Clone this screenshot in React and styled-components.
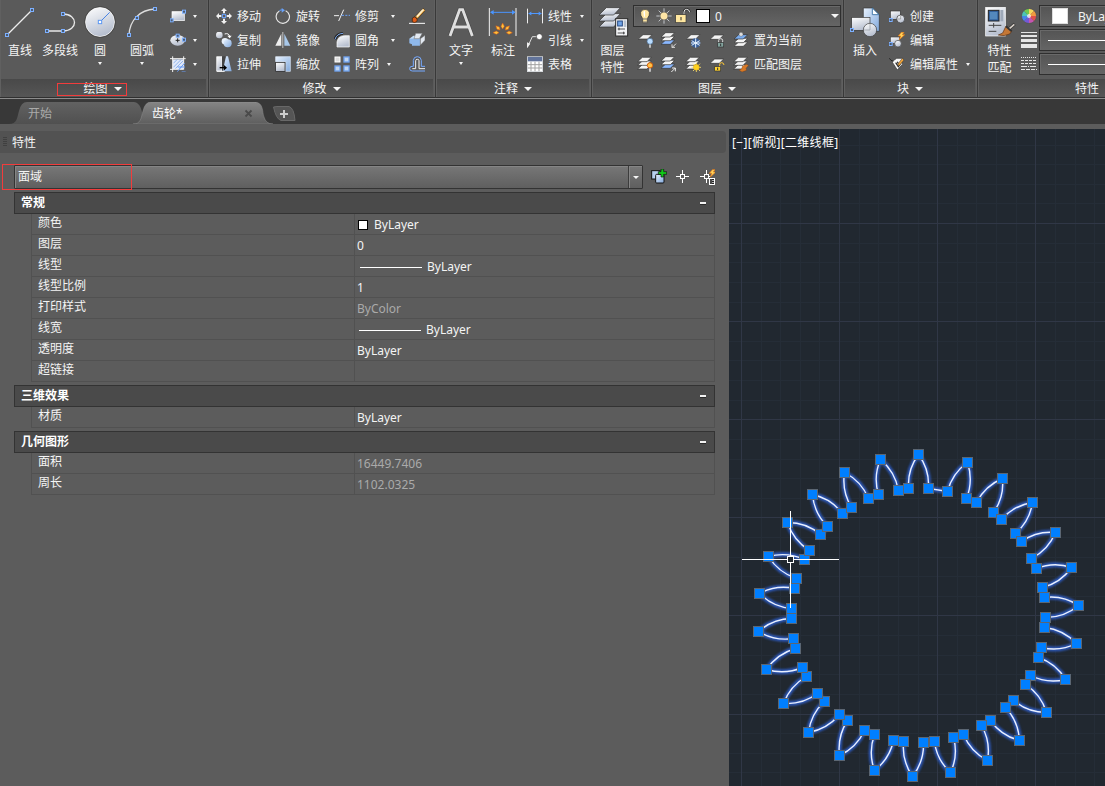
import React from "react";
import styled, { createGlobalStyle } from "styled-components";

const Global = createGlobalStyle`
  * { box-sizing: border-box; }
  body { margin: 0; background: #5c5c5c; overflow: hidden; }
`;

const Screen = styled.div`
  width: 1105px;
  height: 786px;
  display: flex;
  flex-direction: column;
  overflow: hidden;
  background: #5c5c5c;
  color: #f4f4f4;
  font: 12px/16px "Noto Sans", "Noto Sans CJK SC", sans-serif;
  white-space: nowrap;
  cursor: default;
`;

/* ---------- ribbon ---------- */
const Ribbon = styled.div`
  flex: none;
  display: flex;
  height: 99px;
  background: #5a5a5a;
  border-bottom: 1px solid #8c8c8c;
  overflow: hidden;
`;
const Group = styled.section`
  flex: none;
  width: ${(p) => p.$w}px;
  display: flex;
  flex-direction: column;
  border-right: 1px solid #393939;
  border-bottom: 1px solid #303030;
  box-shadow: inset -1px 0 #606060, inset 1px 0 #606060;
`;
const GroupBody = styled.div`
  flex: none;
  height: 79px;
  display: flex;
  padding-left: ${(p) => p.$pad || 0}px;
`;
const GroupTitle = styled.footer`
  flex: 1;
  display: flex;
  align-items: center;
  justify-content: center;
  gap: 6px;
  margin: 0 2px 0 1px;
  padding-top: 2px;
  padding-right: ${(p) => p.$shift || 0}px;
  background: linear-gradient(#494949, #565656);
`;
const TitleMark = styled.span`
  position: absolute;
  left: 57px;
  top: 83px;
  width: 70px;
  height: 13px;
  border: 1px solid #f23c3c;
`;
const Arrow = styled.i`
  flex: none;
  width: 0;
  height: 0;
  border: ${(p) => p.$s || 2.5}px solid transparent;
  border-top: ${(p) => (p.$s || 2.5) + 0.5}px solid #f5f5f5;
  border-bottom: 0;
  margin-left: ${(p) => p.$ml || 0}px;
`;
const BigButton = styled.div`
  flex: none;
  width: ${(p) => p.$w}px;
  padding-top: 6px;
  display: flex;
  flex-direction: column;
  align-items: center;
`;
const BigLabel = styled.span`
  margin-top: ${(p) => (p.$next ? 1 : 5)}px;
  margin-bottom: ${(p) => (p.$arrow ? 3 : 0)}px;
  line-height: 16px;
`;
const Column = styled.div`
  flex: none;
  width: ${(p) => p.$w}px;
  padding-top: ${(p) => p.$top ?? 4}px;
  padding-left: ${(p) => p.$pl || 0}px;
  display: flex;
  flex-direction: column;
`;
const Tool = styled.div`
  height: 24px;
  display: flex;
  align-items: center;
`;
const ToolLabel = styled.span`
  margin-left: 5px;
  padding-top: 2px;
`;
const Combo = styled.div`
  height: 22px;
  margin-bottom: ${(p) => p.$mb ?? 2}px;
  width: ${(p) => p.$w}px;
  display: flex;
  align-items: center;
  padding: 0 1px 0 ${(p) => p.$pl || 0}px;
  gap: ${(p) => p.$gap || 0}px;
  border: 1px solid #2f2f2f;
  background: linear-gradient(#545454, #656565);
  box-shadow: inset 1px 1px #696969;
`;
const ComboText = styled.span`
  padding-top: 2px;
`;
const Swatch = styled.span`
  flex: none;
  width: ${(p) => p.$s}px;
  height: ${(p) => p.$s}px;
  margin-left: ${(p) => p.$ml || 0}px;
  margin-right: ${(p) => p.$mr || 0}px;
  background: #fff;
  border: 1px solid ${(p) => p.$edge || "#000"};
`;
const Spacer = styled.span`
  flex: 1;
`;
const Rule = styled.span`
  width: ${(p) => p.$w}px;
  height: 1px;
  background: #fff;
`;

const Svg = styled.svg`
  flex: none;
  display: block;
`;
/* Icons are drawn on a grid of three units to a pixel. */
const Icon = ({ x = 0, y = 0, s = 16, children }) => (
  <Svg width={s} height={s} viewBox={`${x} ${y} ${s * 3} ${s * 3}`} fill="none">
    {children}
  </Svg>
);
const Grip = ({ x, y }) => (
  <rect x={x - 4.5} y={y - 4.5} width="9" height="9" fill="#4a5a70" stroke="#7db0ff" strokeWidth="3" />
);
const Sheet = ({ x, y, fill = "#f4f4f4" }) => (
  <path d={`M${x} ${y}h27l-13 13h-28z`} fill={fill} stroke="#333" strokeWidth="2" />
);
const Stack = ({ x = 0, y = 0, last = "#f4f4f4", first = "#f4f4f4" }) => (
  <g transform={`translate(${x} ${y})`}>
    <Sheet x={16} y={26} fill={last} />
    <Sheet x={16} y={15} />
    <Sheet x={16} y={4} fill={first} />
  </g>
);

const Defs = () => (
  <DefsSvg width="0" height="0">
    <defs>
      <linearGradient id="metal" x1="0" y1="0" x2="0.4" y2="1">
        <stop offset="0" stopColor="#fff" />
        <stop offset="1" stopColor="#b8c0d0" />
      </linearGradient>
      <linearGradient id="blue" x1="0" y1="0" x2="1" y2="1">
        <stop offset="0" stopColor="#e8f2ff" />
        <stop offset="1" stopColor="#80a8dc" />
      </linearGradient>
      <linearGradient id="tabOn" x1="0" y1="0" x2="0" y2="1">
        <stop offset="0" stopColor="#858585" />
        <stop offset="1" stopColor="#5e5e5e" />
      </linearGradient>
      <linearGradient id="tabOff" x1="0" y1="0" x2="0" y2="1">
        <stop offset="0" stopColor="#626262" />
        <stop offset="1" stopColor="#505050" />
      </linearGradient>
      <filter id="glow" x="-10%" y="-10%" width="120%" height="120%">
        <feGaussianBlur stdDeviation="0.8" />
      </filter>
    </defs>
  </DefsSvg>
);
const DefsSvg = styled.svg`
  position: absolute;
`;

const LineIcon = () => (
  <Icon x={12} y={18} s={32}>
    <path d="M21 105L96 30" stroke="#eee" strokeWidth="3.5" />
    <Grip x={21} y={105} />
    <Grip x={96} y={30} />
  </Icon>
);
const PolylineIcon = () => (
  <Icon x={132} y={18} s={32}>
    <path d="M141 93H189C235 93 235 42 189 42" stroke="#e8e8e8" strokeWidth="4" />
    <Grip x={141} y={93} />
    <Grip x={189} y={93} />
    <Grip x={189} y={42} />
  </Icon>
);
const CircleIcon = () => (
  <Icon x={252} y={18} s={32}>
    <circle cx="300" cy="66" r="44" fill="url(#metal)" stroke="#fafafa" strokeWidth="3" />
    <circle cx="300" cy="66" r="46" stroke="#333" strokeWidth="2" />
    <path d="M300 66L329 37" stroke="#4b86e6" strokeWidth="3" />
    <rect x="295" y="61" width="10" height="10" fill="#fff" stroke="#5c98f4" strokeWidth="3" />
  </Icon>
);
const ArcIcon = () => (
  <Icon x={378} y={18} s={32}>
    <path d="M387 105C389 62 418 29 465 27" stroke="#ddd" strokeWidth="4" />
    <Grip x={387} y={105} />
    <Grip x={411} y={54} />
    <Grip x={465} y={27} />
  </Icon>
);
const RectIcon = () => (
  <Icon x={510} y={24}>
    <rect x="516" y="35" width="37" height="27" fill="url(#metal)" stroke="#fff" strokeWidth="2" />
    <Grip x={515} y={61} />
    <Grip x={552} y={35} />
  </Icon>
);
const EllipseIcon = () => (
  <Icon x={510} y={96}>
    <ellipse cx="533" cy="121" rx="22" ry="16" fill="url(#metal)" />
    <path d="M527 121h12M533 115v12" stroke="#222" strokeWidth="3" />
    <Grip x={533} y={107} />
    <Grip x={552} y={119} />
  </Icon>
);
const HatchIcon = () => (
  <Icon x={510} y={168}>
    <rect x="519" y="178" width="32" height="29" fill="#dfe8fa" />
    <path d="M520 190l12-12M520 202l24-24M526 206l26-26M538 206l14-14" stroke="#6a98e0" strokeWidth="2" />
    <path d="M510 176h47M510 208h40M518 169v47M551 169v40" stroke="#f5f5f5" strokeWidth="3" />
    <path d="M554 189L532 215M533 201h22M545 216h12" stroke="#669bf5" strokeWidth="3" />
  </Icon>
);
const MoveIcon = () => (
  <Icon>
    <path d="M24 0l9 9h-6v7h-6V9h-6zM24 48l9-9h-6v-7h-6v7h-6zM0 24l9-9v6h7v6H9v6zM48 24l-9-9v6h-7v6h7v6z" fill="#f1f1f1" />
    <rect x="19" y="19" width="10" height="10" stroke="#6ba4ff" strokeWidth="3" />
  </Icon>
);
const RotateIcon = () => (
  <Icon>
    <path d="M32 8a20 20 0 1 1-19 1" stroke="#e6e6e6" strokeWidth="3.5" />
    <path d="M13 8q6-3 9-2" stroke="#5d91dd" strokeWidth="3.5" />
    <path d="M20 0l10 7-10 7z" fill="#6aa2f6" />
  </Icon>
);
const TrimIcon = () => (
  <Icon>
    <path d="M0 23h15M14 39L29 5" stroke="#f1f1f1" strokeWidth="3" />
    <path d="M23 22h7m4 0h6m4 0h4" stroke="#6aa2fa" strokeWidth="3" />
  </Icon>
);
const BrushIcon = () => (
  <Icon>
    <path d="M0 46h48" stroke="#fff" strokeWidth="3" />
    <path d="M43 1l6 6L25 33l-7-7z" fill="#e8a23c" stroke="#3a2a1a" strokeWidth="2" />
    <path d="M40 4L22 24l4 4 20-23z" fill="#fff0c8" />
    <path d="M10 30q7-6 12 0t1 11q-7 5-13 0z" fill="#e35c16" stroke="#302010" strokeWidth="2" />
  </Icon>
);
const CopyIcon = () => (
  <Icon>
    <circle cx="10" cy="9" r="10" fill="url(#metal)" />
    <circle cx="27" cy="28" r="10" fill="#e9f1fb" />
    <circle cx="35" cy="34" r="12" fill="url(#blue)" />
    <path d="M26 6q12-4 15 7" stroke="#fff" strokeWidth="3" />
    <path d="M34 11h13l-6 8z" fill="#fff" />
  </Icon>
);
const MirrorIcon = () => (
  <Icon>
    <path d="M19 5v36H1z" fill="#eee" />
    <path d="M28 5v36h18z" fill="#a8c7e8" />
    <path d="M23.5 0v48" stroke="#fff" strokeWidth="2" />
  </Icon>
);
const FilletIcon = () => (
  <Icon>
    <path d="M9 45V30Q12 12 31 11h15v34z" fill="url(#metal)" stroke="#fff" strokeWidth="2" />
    <path d="M3 22Q8 5 27 4" stroke="#222" strokeWidth="8" />
    <path d="M3 22Q8 5 27 4" stroke="#80adf0" strokeWidth="3" />
  </Icon>
);
const CubeIcon = () => (
  <Icon>
    <path d="M1 20l8-3v20l-8-3zM9 17h24v24H9z" fill="#8fb8ea" />
    <path d="M1 20L13 11h21l-4 8z" fill="#c5ddf5" />
    <path d="M20 4h20l-9 16H15zM34 20l14-10v15L34 40z" fill="#e3e9f1" stroke="#666" strokeWidth="1.5" />
  </Icon>
);
const StretchIcon = () => (
  <Icon>
    <path d="M2 2h16v43H2z" fill="url(#metal)" stroke="#fff" strokeWidth="2" />
    <path d="M18 30L29 1h7l11 45H18z" fill="url(#blue)" />
    <path d="M18 1h12l-10 45h-2z" fill="#444" />
    <path d="M2 46h24" stroke="#fff" strokeWidth="3" />
    <path d="M11 35h16" stroke="#000" strokeWidth="4" />
    <path d="M23 26v18l10-9z" fill="#000" />
  </Icon>
);
const ScaleIcon = () => (
  <Icon>
    <path d="M2 2h44v44H32V17H2z" fill="url(#blue)" stroke="#e3efff" strokeWidth="2" />
    <rect x="2" y="19" width="28" height="27" fill="url(#metal)" stroke="#222" strokeWidth="2" />
  </Icon>
);
const ArrayIcon = () => (
  <Icon>
    <rect x="3" y="3" width="15" height="15" fill="#ddd" stroke="#fff" strokeWidth="3" />
    {[[30, 3], [3, 30], [30, 30]].map(([x, y]) => (
      <rect key={x + y * 50} x={x} y={y} width="15" height="15" fill="#c1d6f1" stroke="#70a2ef" strokeWidth="4" />
    ))}
  </Icon>
);
const OffsetIcon = () => (
  <Icon>
    <path d="M48 31H37V13Q36 2 25 2T13 13v18H9Q2 31 2 38t8 7h38" stroke="#75a9ff" strokeWidth="3" />
    <path d="M48 38H30V14q0-4-5-4t-5 4v24H10" stroke="#f1f1f1" strokeWidth="3" />
  </Icon>
);
const TextIcon = () => (
  <Icon s={32}>
    <path d="M15 90L44 11h9l29 79M25 63h47" stroke="#303030" strokeWidth="12" opacity=".5" />
    <path d="M15 90L44 11h9l29 79M25 63h47" stroke="#dedede" strokeWidth="8.500" />
  </Icon>
);
const DimensionIcon = () => (
  <Icon s={32}>
    <path d="M7 6v84M87 6v84" stroke="#f4f4f4" strokeWidth="3" />
    <path d="M12 19h70" stroke="#4a95ff" strokeWidth="3" />
    <path d="M9 19l11-7v14zM86 19l-11-7v14z" fill="#4a95ff" />
    {[-90, -45, 0, 45, 90].map((a) => (
      <g key={a} transform={`rotate(${a} 47 80)`}>
        <path d="M47 51l5 10-5 8-5-8z" fill="#ffc13a" stroke="#e05812" strokeWidth="1.500" />
      </g>
    ))}
  </Icon>
);
const LinearIcon = () => (
  <Icon>
    <path d="M1.500 2v44M46.500 2v44" stroke="#eee" strokeWidth="3" />
    <path d="M5 16.500h38" stroke="#4f98ff" strokeWidth="3" />
    <path d="M4 16.500l9-6v12zM44 16.500l-9-6v12z" fill="#4f98ff" />
  </Icon>
);
const LeaderIcon = () => (
  <Icon>
    <path d="M4 40L16 14h14" stroke="#ddd" strokeWidth="3" />
    <circle cx="37" cy="14" r="9" fill="#fff" stroke="#383838" strokeWidth="2" />
    <path d="M0 31l10 4-9 13H0z" fill="#eee" />
  </Icon>
);
const TableIcon = () => (
  <Icon>
    <rect x="1" y="3" width="46" height="44" fill="#fff" />
    <path d="M1 3h46v13H1z" fill="#62749b" />
    <path d="M1 26h46M1 36h46M12 17v30M24 17v30M36 17v30" stroke="#a1a1a1" strokeWidth="3" />
    <rect x="1" y="2" width="46" height="45" stroke="#dfe3e8" strokeWidth="2" />
  </Icon>
);
const LayersIcon = () => (
  <Icon s={32}>
    {[41, 23, 5].map((y) => (
      <path key={y} d={`M28 ${y}h42l-20 22H6z`} fill="url(#metal)" stroke="#303030" strokeWidth="2" />
    ))}
    <rect x="56" y="38" width="36" height="52" fill="#f3f4f6" stroke="#2b2b2b" strokeWidth="3" />
    <rect x="62" y="45" width="14" height="15" fill="#71a4e7" stroke="#274a82" strokeWidth="3" />
    <path d="M80 43h8v20h-8z" fill="#b9c3cf" />
    <path d="M62 69h22M62 81h22M66 65v8M80 77v8" stroke="#333" strokeWidth="2.5" />
  </Icon>
);
const BulbIcon = () => (
  <Icon>
    <path d="M17 44V32Q9 22 11 13 14 4 24 4t13 9q2 9-6 19v12z" fill="#ffe6a0" stroke="#333" strokeWidth="2" />
    <path d="M17 33h14M18 42h12" stroke="#777" strokeWidth="3" />
    <path d="M19 11q3-3 5-2v17h-3z" fill="#fff" />
  </Icon>
);
const SunIcon = () => (
  <Icon>
    <path d="M24 1v46M1 24h46M8 8l32 32M40 8L8 40" stroke="#d7dbe0" strokeWidth="2.5" />
    <circle cx="24" cy="24" r="12" fill="#ffe6a6" stroke="#555" strokeWidth="2" />
  </Icon>
);
const UnlockIcon = () => (
  <Icon>
    <path d="M27 20V12q0-8 8-8t9 9" stroke="#222" strokeWidth="6" />
    <path d="M27 20V12q0-8 8-8t9 9" stroke="#eee" strokeWidth="3" />
    <rect x="2" y="20" width="31" height="24" fill="#ffe7a0" stroke="#333" strokeWidth="2" />
    <path d="M18 27v10" stroke="#333" strokeWidth="3" />
  </Icon>
);
const LayerOffIcon = () => (
  <Icon>
    <Sheet x={18} y={8} />
    <path d="M39 30v17" stroke="#eee" strokeWidth="4" />
    <circle cx="39" cy="28" r="9" fill="#b9dcff" stroke="#496b91" strokeWidth="2" />
  </Icon>
);
const LayerOnIcon = () => (
  <Icon>
    <Stack />
    <path d="M39 30v17" stroke="#eee" strokeWidth="4" />
    <circle cx="39" cy="28" r="8" fill="#ffc349" stroke="#d65e09" strokeWidth="3" />
  </Icon>
);
const LayerArrowIcon = ({ back }) => (
  <Icon>
    <Stack last="#8ab8ff" x={-2} y={-2} />
    {back ? (
      <path d="M45 35L33 47M33 37v9h9" stroke="#ddd" strokeWidth="3" />
    ) : (
      <path d="M31 48l12-12M33 36h10v10" stroke="#eee" strokeWidth="3" />
    )}
  </Icon>
);
const FreezeIcon = () => (
  <Icon>
    <Sheet x={18} y={8} />
    <circle cx="32" cy="33" r="14" fill="#375e99" />
    <path d="M32 19v28M20 26l24 14M44 26L20 40M18 33h28" stroke="#e4f1ff" strokeWidth="3" />
  </Icon>
);
const ThawIcon = () => (
  <Icon>
    <Stack />
    <path d="M34 19v29M19 34h29M24 23l21 22M45 23L24 45" stroke="#ffe273" strokeWidth="2.500" />
    <circle cx="34" cy="34" r="9" fill="#ffd21f" stroke="#c79310" strokeWidth="1" />
  </Icon>
);
const LockIcon = ({ open }) => (
  <Icon>
    <Sheet x={17} y={9} />
    <path d={open ? "M32 32v-6q0-6 6-6t7 7" : "M29 32v-7q0-5 6-5t6 5v7"} stroke={open ? "#ffc935" : "#ddd"} strokeWidth="3" />
    <rect x={open ? 17 : 26} y="32" width="18" height="13" fill={open ? "#ffd331" : "#83a39d"} stroke="#333" strokeWidth="2" />
    <path d={open ? "M26 35v7" : "M35 35v7"} stroke="#333" strokeWidth="3" />
  </Icon>
);
const CurrentLayerIcon = () => (
  <Icon>
    <Stack first="#79abed" x={1} y={4} />
    <circle cx="24" cy="7" r="6" fill="#ddd" stroke="#555" strokeWidth="1" />
  </Icon>
);
const MatchLayerIcon = () => (
  <Icon>
    <Stack />
    <path d="M40 25l7 3-8 9 2 6-14 5-9-6 8-3 2-8z" fill="#d87925" stroke="#6b3818" strokeWidth="1" />
  </Icon>
);
const InsertIcon = () => (
  <Icon s={32}>
    <path d="M43 6h28l20 20v50H43z" fill="url(#blue)" stroke="#333" strokeWidth="2" />
    <path d="M70 6v20h20z" fill="#fff" stroke="#467bab" strokeWidth="3" />
    <rect x="8" y="34" width="55" height="39" fill="url(#metal)" stroke="#333" strokeWidth="2" />
    <circle cx="63" cy="72" r="20" fill="url(#metal)" stroke="#353535" strokeWidth="2" />
    <path d="M45 72h18V54" stroke="#91979f" strokeWidth="2" />
    <Grip x={9} y={72} />
  </Icon>
);
const CreateBlockIcon = () => (
  <Icon>
    <rect x="4" y="9" width="30" height="25" fill="url(#metal)" stroke="#333" strokeWidth="2" />
    <circle cx="35" cy="33" r="12" fill="url(#metal)" stroke="#333" strokeWidth="2" />
    <path d="M26 33h9V23" stroke="#888" strokeWidth="2" />
    <Grip x={5} y={36} />
  </Icon>
);
const Bolt = ({ x, y }) => (
  <path transform={`translate(${x} ${y})`} d="M10 0h8l-5 7h7L4 22l4-11H1z" fill="#ffd35a" stroke="#e87813" strokeWidth="2" />
);
const EditBlockIcon = () => (
  <Icon>
    <rect x="4" y="15" width="27" height="19" fill="url(#metal)" stroke="#444" strokeWidth="2" />
    <circle cx="27" cy="35" r="10" fill="url(#metal)" stroke="#444" strokeWidth="2" />
    <Grip x={5} y={36} />
    <Bolt x={27} y={1} />
  </Icon>
);
const EditAttrIcon = () => (
  <Icon>
    <path d="M9 17l14-10h18l-1 18-15 17z" fill="#f8f8f8" stroke="#333" strokeWidth="2" />
    <path d="M1 7q4 7 12 9" stroke="#222" strokeWidth="3" />
    <path d="M20 20l8 12 13-19M25 17l4 8" stroke="#222" strokeWidth="3.500" />
    <path d="M40 7l5 5-13 16-6 2 2-8z" fill="#f0a53d" stroke="#333" strokeWidth="1.5" />
  </Icon>
);
const MatchPropsIcon = () => (
  <Icon s={32}>
    <rect x="5" y="4" width="59" height="86" fill="url(#metal)" stroke="#fff" strokeWidth="2" />
    <rect x="13" y="13" width="32" height="32" fill="#315f9b" stroke="#222" strokeWidth="3" />
    <rect x="18" y="18" width="22" height="22" fill="#5388bd" />
    <path d="M49 12h9v34h-9z" fill="#9ea9b9" />
    <path d="M14 58h38M29 51v14M14 76h23" stroke="#444" strokeWidth="3" />
    <path d="M66 60l17 16-6 8q-16 8-34 3l13-6z" fill="#c47735" stroke="#5b3013" strokeWidth="2" />
    <path d="M66 61l17 15" stroke="#333" strokeWidth="6" />
    <path d="M77 67l15-13" stroke="#333" strokeWidth="9" />
    <path d="M77 67l14-12" stroke="#d8d0c8" strokeWidth="5" />
  </Icon>
);
const WheelIcon = () => (
  <Icon>
    {["#f5d75a", "#f09a3f", "#e0504d", "#c455b0", "#7458d6", "#4686e8", "#4cc4b5", "#70c950"].map((c, i) => (
      <path key={c} d="M24 24V2A22 22 0 0 1 39.6 8.4z" fill={c} transform={`rotate(${i * 45} 24 24)`} />
    ))}
    <circle cx="24" cy="24" r="6" fill="#fff" opacity=".75" />
    <circle cx="24" cy="24" r="22.5" stroke="#555" strokeWidth="2" />
  </Icon>
);
const WeightIcon = () => (
  <Icon>
    <path d="M0 1.500h48" stroke="#e5e5e5" strokeWidth="3" />
    <path d="M0 12h48" stroke="#e5e5e5" strokeWidth="6" />
    <path d="M0 25.500h48" stroke="#e5e5e5" strokeWidth="9" />
    <path d="M0 42h48" stroke="#e5e5e5" strokeWidth="12" />
  </Icon>
);
const DashesIcon = () => (
  <Icon>
    <path d="M0 4.500h48" stroke="#e5e5e5" strokeWidth="3" strokeDasharray="3 3" />
    <path d="M0 13.500h48M0 22.500h48" stroke="#e5e5e5" strokeWidth="3" strokeDasharray="9 3" />
    <path d="M0 31.500h48" stroke="#e5e5e5" strokeWidth="3" strokeDasharray="18 3 3 3" />
    <path d="M0 40.500h48" stroke="#e5e5e5" strokeWidth="3" strokeDasharray="12 3" />
  </Icon>
);

const ToolItem = ({ icon, label, arrow }) => (
  <Tool>
    {icon}
    {label && <ToolLabel>{label}</ToolLabel>}
    {arrow !== undefined && <Arrow $ml={arrow} />}
  </Tool>
);
const Big = ({ w, icon, label, second, arrow }) => (
  <BigButton $w={w}>
    {icon}
    <BigLabel $arrow={arrow}>{label}</BigLabel>
    {second && <BigLabel $next>{second}</BigLabel>}
    {arrow && <Arrow />}
  </BigButton>
);

const RibbonBar = () => (
  <Ribbon>
    <Group $w={209}>
      <GroupBody>
        <Big w={40} icon={<LineIcon />} label="直线" />
        <Big w={40} icon={<PolylineIcon />} label="多段线" />
        <Big w={40} icon={<CircleIcon />} label="圆" arrow />
        <Big w={44} icon={<ArcIcon />} label="圆弧" arrow />
        <Column $w={41} $pl={6}>
          <ToolItem icon={<RectIcon />} arrow={7} />
          <ToolItem icon={<EllipseIcon />} arrow={7} />
          <ToolItem icon={<HatchIcon />} arrow={7} />
        </Column>
      </GroupBody>
      <GroupTitle $shift={2}>绘图<Arrow $s={4} /></GroupTitle>
      <TitleMark />
    </Group>
    <Group $w={227}>
      <GroupBody $pad={7}>
        <Column $w={59}>
          <ToolItem icon={<MoveIcon />} label="移动" />
          <ToolItem icon={<CopyIcon />} label="复制" />
          <ToolItem icon={<StretchIcon />} label="拉伸" />
        </Column>
        <Column $w={59}>
          <ToolItem icon={<RotateIcon />} label="旋转" />
          <ToolItem icon={<MirrorIcon />} label="镜像" />
          <ToolItem icon={<ScaleIcon />} label="缩放" />
        </Column>
        <Column $w={75}>
          <ToolItem icon={<TrimIcon />} label="修剪" arrow={12} />
          <ToolItem icon={<FilletIcon />} label="圆角" arrow={12} />
          <ToolItem icon={<ArrayIcon />} label="阵列" arrow={8} />
        </Column>
        <Column $w={20}>
          <ToolItem icon={<BrushIcon />} />
          <ToolItem icon={<CubeIcon />} />
          <ToolItem icon={<OffsetIcon />} />
        </Column>
      </GroupBody>
      <GroupTitle>修改<Arrow $s={4} /></GroupTitle>
    </Group>
    <Group $w={156}>
      <GroupBody $pad={4}>
        <Big w={42} icon={<TextIcon />} label="文字" arrow />
        <Big w={42} icon={<DimensionIcon />} label="标注" />
        <Column $w={64} $pl={3}>
          <ToolItem icon={<LinearIcon />} label="线性" arrow={8} />
          <ToolItem icon={<LeaderIcon />} label="引线" arrow={8} />
          <ToolItem icon={<TableIcon />} label="表格" />
        </Column>
      </GroupBody>
      <GroupTitle>注释<Arrow $s={4} /></GroupTitle>
    </Group>
    <Group $w={252}>
      <GroupBody>
        <Big w={41} icon={<LayersIcon />} label="图层" second="特性" />
        <Column $w={208} $top={5}>
          <Combo $w={208} $pl={3} $gap={3} $mb={1}>
            <BulbIcon />
            <SunIcon />
            <UnlockIcon />
            <Swatch $s={14} $ml={2} $mr={2} />
            <ComboText>0</ComboText>
            <Spacer />
            <Arrow $s={4} />
          </Combo>
          <LayerRow>
            <LayerOffIcon />
            <LayerArrowIcon back />
            <FreezeIcon />
            <LockIcon />
            <CurrentLayerIcon />
            <ToolLabel>置为当前</ToolLabel>
          </LayerRow>
          <LayerRow>
            <LayerOnIcon />
            <LayerArrowIcon />
            <ThawIcon />
            <LockIcon open />
            <MatchLayerIcon />
            <ToolLabel>匹配图层</ToolLabel>
          </LayerRow>
        </Column>
      </GroupBody>
      <GroupTitle>图层<Arrow $s={4} /></GroupTitle>
    </Group>
    <Group $w={134}>
      <GroupBody>
        <Big w={42} icon={<InsertIcon />} label="插入" />
        <Column $w={88} $pl={3}>
          <ToolItem icon={<CreateBlockIcon />} label="创建" />
          <ToolItem icon={<EditBlockIcon />} label="编辑" />
          <ToolItem icon={<EditAttrIcon />} label="编辑属性" arrow={8} />
        </Column>
      </GroupBody>
      <GroupTitle>块<Arrow $s={4} /></GroupTitle>
    </Group>
    <Group $w={240}>
      <GroupBody>
        <Big w={43} icon={<MatchPropsIcon />} label="特性" second="匹配" />
        <Column $w={18}>
          <ToolItem icon={<WheelIcon />} />
          <ToolItem icon={<WeightIcon />} />
          <ToolItem icon={<DashesIcon />} />
        </Column>
        <Column $w={160} $top={5}>
          <Combo $w={160} $pl={12} $gap={10}>
            <Swatch $s={16} $edge="#ddd" />
            <ComboText>ByLayer</ComboText>
          </Combo>
          <Combo $w={160} $pl={8}><Rule $w={140} /></Combo>
          <Combo $w={160} $pl={8}><Rule $w={140} /></Combo>
        </Column>
      </GroupBody>
      <GroupTitle $shift={6}>特性<Arrow $s={4} /></GroupTitle>
    </Group>
  </Ribbon>
);

const LayerRow = styled.div`
  height: 24px;
  display: flex;
  align-items: center;
  gap: 8px;
  padding-left: 4px;
  ${ToolLabel} { margin-left: -3px; }
`;

/* ---------- document tabs ---------- */
const TabBar = styled.nav`
  flex: none;
  height: 25px;
  display: flex;
  align-items: flex-end;
  background: #383838;
  padding-left: 9px;
`;
const Tab = styled.div`
  position: relative;
  flex: none;
  width: ${(p) => p.$w}px;
  height: 22px;
  margin-left: ${(p) => p.$ml || 0}px;
  padding: 2px 15px 0 ${(p) => p.$pl}px;
  display: flex;
  align-items: center;
  color: ${(p) => (p.$on ? "#fff" : "#aaa")};
`;
const TabShape = styled.svg`
  position: absolute;
  left: 0;
  top: 0;
`;
const CloseMark = styled.svg`
  position: absolute;
  left: 111px;
  top: 7px;
`;
const TabText = styled.span`
  position: relative;
`;
const NewTab = styled.svg`
  margin-bottom: 3px;
`;
const Tabs = () => (
  <TabBar>
    <Tab $w={135} $pl={19}>
      <TabShape width="135" height="22">
        <path d="M0 22C8 22 8 16 10 9Q12 0 18 0H125Q134 1 134 22z" fill="url(#tabOff)" />
      </TabShape>
      <TabText>开始</TabText>
    </Tab>
    <Tab $w={140} $pl={19} $ml={-11} $on>
      <TabShape width="140" height="22">
        <path d="M0 22C8 22 8 16 10 9Q12 0 18 0H121C131 0 129 10 131 15Q133 22 140 22z" fill="url(#tabOn)" stroke="#999" strokeWidth=".4" />
      </TabShape>
      <TabText>齿轮*</TabText>
      <CloseMark width="9" height="9" viewBox="0 0 9 9">
        <path d="M1.500 1.500l6 6M7.500 1.500l-6 6" stroke="#4a4a4a" strokeWidth="1.8" />
      </CloseMark>
    </Tab>
    <NewTab width="23" height="15" viewBox="0 0 23 15">
      <path d="M4 .5h12Q21 2 22 14.500H8Q3 13 .5 1z" fill="#555" stroke="#686868" />
      <path d="M7 8h8M11 4v8" stroke="#ccc" strokeWidth="2" />
    </NewTab>
  </TabBar>
);

/* ---------- workspace ---------- */
const Work = styled.main`
  flex: 1;
  display: flex;
  min-height: 0;
`;
const Palette = styled.aside`
  flex: none;
  width: 729px;
  padding-top: 7px;
`;
const PaletteTitle = styled.header`
  width: 726px;
  height: 22px;
  display: flex;
  align-items: center;
  gap: 5px;
  padding: 2px 0 0 3px;
  background: #525252;
  border-top-right-radius: 4px;
  border-bottom-right-radius: 4px;
`;
const Handle = styled.i`
  width: 4px;
  height: 10px;
  margin-top: -3px;
  background: repeating-linear-gradient(#383838 0 1px, transparent 1px 2px);
  opacity: 0.7;
`;
const Selector = styled.div`
  position: relative;
  display: flex;
  align-items: center;
  padding: 12px 0 0 14px;
  height: 36px;
`;
const SelectField = styled.div`
  width: 629px;
  height: 24px;
  display: flex;
  border: 1px solid #333;
  border-radius: 1px;
  background: linear-gradient(#777, #5f5f5f);
  box-shadow: inset 1px 1px #858585;
  margin-right: 8px;
  & > span { flex: 1; padding: 3px 0 0 3px; }
`;
const SelectDrop = styled.div`
  width: 14px;
  border-left: 1px solid #3c3c3c;
  box-shadow: inset 1px 1px #858585;
  display: flex;
  align-items: center;
  justify-content: center;
`;
const SelectMark = styled.i`
  position: absolute;
  left: 2px;
  top: 11px;
  width: 130px;
  height: 26px;
  border: 1px solid #f23c3c;
`;
const PickTools = styled.div`
  display: flex;
  gap: 8px;
`;
const Section = styled.section`
  width: 701px;
  margin: 3px 0 0 14px;
`;
const SectionHead = styled.h3`
  margin: 0;
  height: 22px;
  display: flex;
  align-items: center;
  justify-content: space-between;
  padding: 0 8px 0 6px;
  font-size: 12px;
  font-weight: 700;
  border: 1px solid #333;
  background: #4a4a4a;
  color: #fff;
`;
const Minus = styled.i`
  width: 6px;
  height: 2px;
  background: #f2f2f2;
  box-shadow: 0 1px #2a2a2a;
`;
const Row = styled.div`
  height: 21px;
  margin-left: 17px;
  width: 684px;
  display: flex;
  border: solid #515151;
  border-width: 0 1px 1px;
`;
const Name = styled.span`
  width: 323px;
  padding: 1px 0 0 6px;
  border-right: 1px solid #515151;
`;
const Value = styled.span`
  display: flex;
  align-items: center;
  padding-top: 2px;
  padding-left: ${(p) => p.$pl ?? 2}px;
  gap: 5px;
  color: ${(p) => (p.$dim ? "#aaa" : "#f4f4f4")};
`;

const sections = [
  ["常规", [
    ["颜色", "ByLayer", "swatch"],
    ["图层", "0"],
    ["线型", "ByLayer", "line"],
    ["线型比例", "1"],
    ["打印样式", "ByColor", "dim"],
    ["线宽", "ByLayer", "weight"],
    ["透明度", "ByLayer"],
    ["超链接", ""],
  ]],
  ["三维效果", [["材质", "ByLayer"]]],
  ["几何图形", [["面积", "16449.7406", "dim"], ["周长", "1102.0325", "dim"]]],
];
const indent = { swatch: 3, line: 5, weight: 4 };

const Properties = () => (
  <Palette>
    <PaletteTitle><Handle />特性</PaletteTitle>
    <Selector>
      <SelectField>
        <span>面域</span>
        <SelectDrop><Arrow $s={3} /></SelectDrop>
      </SelectField>
      <PickTools>
        <Icon>
          <rect x="2" y="5" width="25" height="25" fill="#b8cfee" stroke="#111" strokeWidth="3" />
          <rect x="14" y="16" width="25" height="26" rx="3" fill="url(#blue)" stroke="#111" strokeWidth="3" />
          <path d="M30 0h8v8h9v8h-9v8h-8v-8h-8V8h8z" fill="#10ca18" stroke="#111" strokeWidth="2" />
        </Icon>
        <Icon>
          <path d="M22.500 3v14M22.500 28v14M3 22.500h14M28 22.500h14" stroke="#fff" strokeWidth="3" />
          <rect x="16.500" y="16.500" width="12" height="12" stroke="#fff" strokeWidth="3" />
        </Icon>
        <Icon>
          <path d="M22.500 3v14M22.500 28v14M3 22.500h14M28 22.500h5" stroke="#fff" strokeWidth="3" />
          <rect x="16.500" y="16.500" width="12" height="12" stroke="#fff" strokeWidth="3" />
          <Bolt x={30} y={2} />
          <rect x="31.500" y="28.500" width="15" height="18" fill="#222" stroke="#fff" strokeWidth="3" />
          <path d="M36 31.500v3m0 3v3m0 3v2M39 34.500h6M39 40.500h6" stroke="#fff" strokeWidth="2" />
        </Icon>
      </PickTools>
      <SelectMark />
    </Selector>
    {sections.map(([title, rows]) => (
      <Section key={title}>
        <SectionHead>{title}<Minus /></SectionHead>
        {rows.map(([name, value, kind]) => (
          <Row key={name}>
            <Name>{name}</Name>
            <Value $dim={kind === "dim"} $pl={indent[kind]}>
              {kind === "swatch" && <Swatch $s={10} $mr={1} />}
              {(kind === "line" || kind === "weight") && <Rule $w={62} />}
              {value}
            </Value>
          </Row>
        ))}
      </Section>
    ))}
  </Palette>
);

/* ---------- drawing ---------- */
const Viewport = styled.div`
  position: relative;
  flex: 1;
  margin-top: 5px;
  background: #212830;
`;
const ViewLabel = styled.span`
  position: absolute;
  left: 3px;
  top: 6px;
  color: #fff;
  letter-spacing: 0.3px;
`;
const Canvas = styled.svg`
  display: block;
`;

/* Each tooth: root, tip, root, going clockwise from the top. */
const teeth = [
  [908, 488, 918, 454, 928, 488],
  [947, 491, 967, 462, 966, 498],
  [976, 502, 1002, 478, 993, 512],
  [1001, 519, 1032, 502, 1015, 533],
  [1021, 541, 1055, 532, 1031, 558],
  [1036, 568, 1071, 567, 1042, 587],
  [1044, 597, 1078, 605, 1045, 617],
  [1044, 627, 1076, 643, 1041, 647],
  [1038, 657, 1065, 679, 1030, 675],
  [1025, 684, 1046, 712, 1013, 700],
  [1005, 707, 1019, 740, 990, 720],
  [981, 725, 987, 760, 963, 734],
  [953, 737, 950, 772, 934, 741],
  [923, 742, 912, 776, 903, 741],
  [893, 740, 874, 770, 874, 734],
  [864, 730, 839, 755, 847, 720],
  [839, 714, 808, 732, 824, 701],
  [817, 693, 783, 703, 806, 676],
  [802, 667, 766, 669, 795, 648],
  [793, 638, 758, 631, 791, 618],
  [791, 608, 759, 593, 794, 588],
  [796, 578, 768, 556, 804, 559],
  [809, 550, 787, 522, 820, 534],
  [827, 526, 812, 494, 842, 513],
  [851, 507, 844, 472, 868, 498],
  [878, 494, 880, 459, 898, 490],
];
const bow = (x1, y1, x2, y2) => {
  const len = Math.hypot(x2 - x1, y2 - y1);
  const cx = (x1 + x2) / 2 + ((y2 - y1) / len) * 6.5;
  const cy = (y1 + y2) / 2 - ((x2 - x1) / len) * 6.5;
  return `Q${cx} ${cy} ${x2} ${y2}`;
};
const outline =
  teeth
    .map(([a, b, c, d, e, f], i) => `${i ? "L" : "M"}${a} ${b}${bow(a, b, c, d)}${bow(c, d, e, f)}`)
    .join("") + "z";
const lines = (from, to, step) => {
  const out = [];
  for (let v = from; v < to; v += step) out.push(Math.round(v) + 0.5);
  return out;
};
const gridPath = (step) =>
  lines(741, 1105, step).map((x) => `M${x} 129V786`).join("") +
  lines(step > 50 ? 223 : 144.6, 786, step).map((y) => `M729 ${y}H1105`).join("");

const Drawing = () => (
  <Viewport>
    <Canvas width="376" height="657" viewBox="729 129 376 657" fill="none">
      <path d={gridPath(19.62)} stroke="#252d37" />
      <path d={gridPath(98.1)} stroke="#303746" />
      <g transform="translate(.5 .5)">
        <path d={outline} stroke="#2e62d8" strokeWidth="5" opacity=".8" filter="url(#glow)" />
        <path d={outline} stroke="#e9f0ff" strokeWidth="1.400" />
      </g>
      {teeth.flatMap((t) => [0, 2, 4].map((k) => (
        <rect key={`${t[k]}-${t[k + 1]}`} x={t[k] - 4.5} y={t[k + 1] - 4.5} width="10" height="10" fill="#007fff" stroke="#5b6673" />
      )))}
      <path d="M742 559.500h45M794 559.500h45M790.500 511v45M790.500 563v45" stroke="#fff" />
      <rect x="787.500" y="556.500" width="6" height="6" stroke="#fff" fill="#212830" />
    </Canvas>
    <ViewLabel>[−][俯视][二维线框]</ViewLabel>
  </Viewport>
);

export default function App() {
  return (
    <Screen>
      <Global />
      <Defs />
      <RibbonBar />
      <Tabs />
      <Work>
        <Properties />
        <Drawing />
      </Work>
    </Screen>
  );
}
